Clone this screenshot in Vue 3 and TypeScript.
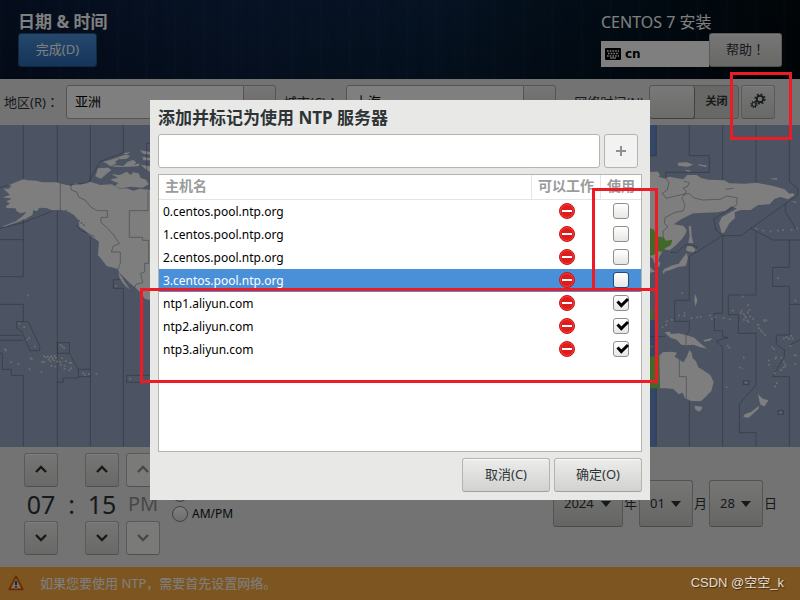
<script setup lang="ts">
import { ref } from 'vue'

interface NtpServer {
  host: string
  enabled: boolean
}

const servers = ref<NtpServer[]>([
  { host: '0.centos.pool.ntp.org', enabled: false },
  { host: '1.centos.pool.ntp.org', enabled: false },
  { host: '2.centos.pool.ntp.org', enabled: false },
  { host: '3.centos.pool.ntp.org', enabled: false },
  { host: 'ntp1.aliyun.com', enabled: true },
  { host: 'ntp2.aliyun.com', enabled: true },
  { host: 'ntp3.aliyun.com', enabled: true },
])
const selected = ref(3)
const newHost = ref('')
const region = ref('亚洲')
const city = ref('上海')
const hourFormat = ref('24')

function addServer(): void {
  const host = newHost.value.trim()
  if (host) {
    servers.value.push({ host, enabled: true })
    newHost.value = ''
  }
}

// Small islands in map units: [x, y]
const westIslands: number[][] = [
  [84, 527], [59, 611], [73, 622], [88, 654], [82, 660], [105, 680], [15, 688], [19, 692], [34, 727], [56, 733],
  [92, 715], [96, 719], [89, 748], [125, 757], [132, 709], [138, 712], [144, 710], [149, 714], [154, 709], [146, 720],
  [152, 724], [158, 717], [163, 722], [168, 714], [172, 725], [158, 712], [127, 726], [132, 726], [155, 738], [167, 740],
  [183, 735], [187, 715], [198, 724], [194, 738], [194, 747], [209, 729], [214, 729], [214, 745], [209, 751], [182, 726],
  [182, 675], [187, 680], [193, 684], [250, 760], [255, 765], [267, 762], [290, 763], [391, 777], [349, 498], [165, 708],
]
const eastIslands: number[][] = [
  [127, 520], [309, 530], [467, 542], [117, 587], [134, 580], [134, 588], [96, 600], [155, 595], [172, 593], [182, 591],
  [211, 587], [216, 597], [227, 591], [251, 595], [270, 599], [279, 572], [303, 579], [305, 573], [312, 583], [316, 590],
  [324, 578], [329, 571], [331, 590], [322, 602], [326, 606], [312, 600], [340, 597], [324, 556], [318, 593], [374, 600],
  [380, 602], [355, 615], [357, 625], [363, 632], [368, 638], [376, 645], [81, 604], [79, 616], [68, 622], [432, 656],
  [440, 652], [447, 657], [454, 648], [458, 656], [452, 678], [397, 683], [403, 688], [387, 722], [388, 735], [407, 716],
  [425, 714], [432, 726], [437, 734], [431, 743], [424, 751], [405, 760], [466, 733], [469, 707], [464, 706], [411, 790],
  [406, 800], [260, 802], [319, 788], [422, 878], [350, 327], [370, 332], [392, 335], [414, 332], [430, 331], [455, 330],
  [472, 326], [264, 678], [269, 684], [312, 713], [436, 740], [414, 475], [409, 712], [373, 604],
]
</script>

<template>
  <div class="screen">
    <header class="header">
      <div class="header-left">
        <h1 class="heading">日期 &amp; 时间</h1>
        <button type="button" class="done">完成(D)</button>
      </div>
      <div class="header-right">
        <div class="product">CENTOS 7 安装</div>
        <div class="header-tools">
          <button type="button" class="layout">
            <svg width="16" height="12" viewBox="0 0 16 12" aria-hidden="true">
              <rect width="16" height="12" rx="1" fill="#000" />
              <path d="M2 3H14M3 5.5H14M2 8H14" stroke="#fff" stroke-width="1.5" stroke-dasharray="1.6 1.1" />
              <path d="M5 10H11" stroke="#fff" stroke-width="1.2" />
            </svg>
            <span>cn</span>
          </button>
          <button type="button" class="btn help">帮助<span class="punct">！</span></button>
        </div>
      </div>
    </header>

    <div class="toolbar">
      <label for="region">地区(R)<span class="punct">：</span></label>
      <div class="combo">
        <input id="region" v-model="region" type="text" />
        <button type="button" aria-label="地区列表"></button>
      </div>
      <label for="city">城市(C)<span class="punct">：</span></label>
      <div class="combo">
        <input id="city" v-model="city" type="text" />
        <button type="button" aria-label="城市列表"></button>
      </div>
      <span id="net-label" class="net-label">网络时间(N)</span>
      <button type="button" class="switch" role="switch" aria-checked="false" aria-labelledby="net-label">
        <span class="knob"></span>
        <span class="state">关闭</span>
      </button>
      <div class="gear-wrap">
        <button type="button" class="btn square" aria-label="配置 NTP">
          <svg width="16" height="16" viewBox="0 0 16 16" fill="none" stroke="#2e3436" aria-hidden="true">
            <circle cx="10" cy="6" r="3.2" stroke-width="1.8" />
            <circle cx="10" cy="6" r="4.8" stroke-width="1.6" stroke-dasharray="1.9 1.87" />
            <circle cx="4" cy="11.5" r="2" stroke-width="1.2" />
            <circle cx="4" cy="11.5" r="3" stroke-width="1.2" stroke-dasharray="1.2 1.156" />
          </svg>
        </button>
        <div class="mark mark-gear"></div>
      </div>
    </div>

    <div class="map">
      <svg viewBox="0 0 2400 966" preserveAspectRatio="xMidYMid slice" aria-hidden="true">
        <rect width="2400" height="966" fill="#98a8c6" />
        <g transform="translate(0 -15)">
          <path class="land" d="M8 232L30 225 20 215 10 205 25 207 35 197 27 195 70 178 82 181 110 182 125 187 170 187 190 193 212 197 228 190 240 194 270 185 285 190 300 195 335 193 360 206 380 205 400 212 420 206 450 210V540L435 537 422 518 405 502 390 490 375 475 358 458 354 447 320 438 304 417 294 405 297 365 284 354 268 345 256 332 238 320 236 303 222 285 205 275 185 270 155 270 140 264 118 263 111 274 100 270 97 285 76 297 55 305 10 321 9 319 48 304 68 288 80 276 62 280 50 274 46 265 20 264 18 258 30 251 19 244 36 236Z" />
          <path class="land" d="M355 457L365 470 374 485 390 508 379 500 367 487 359 474ZM272 344L292 348 304 356 303 364 288 358 277 351Z" />
          <path class="land" d="M294 145L325 143 334 150 322 160 303 176 286 169ZM308 125L330 120 351 113 357 119 345 124 350 130 333 137 345 136 370 138 383 125 400 120 409 127 401 135 418 130 417 138 390 140 355 141 330 138 318 129ZM350 113L375 104 391 107 380 116 362 118ZM370 99L391 97 379 104ZM334 163L360 165 380 155 393 165 399 157 416 160 422 174 438 179 446 193 428 203 392 200 362 205 345 198 355 190 337 182 332 178 354 173ZM419 91L450 96V104L430 101ZM427 110L450 114V121L430 121ZM423 134L450 139V156L435 146Z" />
          <path class="sea-cut" d="M195 270L220 292 235 300 254 317M215 285L235 318" />
          <path class="zone" d="M70 15V178M172 15V187M271 15V185M370 15V98M70 297V470M0 359H70M0 470H70M0 553H70V605M50 605H85L120 680 118 692H90L65 634 50 625ZM0 646H64M0 661H70M7 700V748H34V766H70V980M0 700H7M172 273V787H190V774H235V748L208 700V668H172V700H208M235 748H271V770H235M271 348V748M271 770V980M172 787V980M370 505V980M340 479H362M340 479V505H370M380 766H450M380 766V787H450M0 203L25 196M0 325L70 308 155 274M210 195L265 188 300 125 370 98M228 316L245 332 285 350M440 155V70H450" />
          <path class="zone" d="M181 188V271M212 195L214 210 230 216 237 232 255 240 273 262 293 272H322V292H303V307L321 323 341 345 358 371 340 378 334 396H361V430L354 447M444 212V272H388V352H428V361H446V430H434V456L422 460 428 488 408 493 405 502" />
          <rect v-for="([x, y], i) in westIslands" :key="i" class="isle" :x="x - 3" :y="y - 3" width="5" height="5" />
        </g>
        <g transform="translate(1920 -15)">
          <path fill="#688ecc" d="M0 15H49V108H0ZM30 600H49V980H30Z" />
          <path class="land" d="M25 155L53 155 60 164 56 170 75 176 87 170 130 178 142 165 170 165 183 174 205 179 253 181 268 190 315 191 350 188 400 198 434 208 448 221 460 220 464 226 444 238 422 231 404 236 389 253 354 255 332 270 302 270 284 277 285 294 268 310 252 338 245 339 237 310 245 292 268 278 291 266 274 259 257 272 232 277 193 278 160 280 126 296 101 313 130 317 140 330 136 343 125 358 105 378 89 391 70 388 63 402 58 410 55 422 61 430 57 441 45 432 39 417 25 405Z" />
          <path class="land" d="M146 319H153L155 347 160 370 145 368 149 348ZM142 378L154 377 171 391 160 397 143 394 138 389ZM140 399L144 414 137 438 115 441 99 447 82 453 67 455 74 446 98 436 116 431 130 412ZM67 454L78 450 71 462Z" />
          <path fill="#82d254" d="M25 322L43 330 47 349 70 351 78 362 97 359 93 375 75 385 70 396 49 393 42 405 25 408ZM25 710L58 707V805H25ZM25 565L41 571 35 578 42 593 38 601 25 594ZM25 677L43 677 35 683H25Z" />
          <path class="land" d="M58 707L68 697 97 695 111 698 104 710 118 719 130 727 140 711 148 690 155 699 158 715 168 724 175 742 190 751 211 765 221 786 214 813 197 830 183 844 154 843 135 834 128 818 116 823 100 807 78 805 60 805Z" />
          <path class="land" d="M74 637L90 635 93 642 116 640 145 647 163 653 179 668 201 686 180 681 160 674 141 676 124 674 110 659 91 653ZM164 857L187 860 184 870 176 875 165 867ZM354 822L368 836 385 841 374 859 362 855 359 846ZM357 857L356 866 326 893 310 891 314 883 334 875ZM113 128L140 127 160 134 143 140 115 137ZM175 133L203 137 197 141 175 136ZM134 150L154 152 145 156ZM389 176L412 174 410 179ZM452 243L470 246 467 249ZM165 521L172 540 167 560 163 541ZM190 661L215 654 213 661 194 665ZM295 738L311 747 301 744ZM30 440L45 455 30 458Z" />
          <path class="zone" d="M49 15V108H30M148 15V107H208V157H77V173M248 15V180M348 15V188M448 15V185L473 205V225L333 325 398 360H480M436 250V275L470 330M248 347H303L333 325M290 255L221 297 228 330 248 347 148 410V541H104V604H148V632L138 647V675M248 347V580H223V632H248V650L263 653 248 657 230 664 248 682V980M348 335V525H265V584H295V640H348V795L298 852V938H348V980M448 360V442H398V499H448V553H480M448 553V645H409V673L433 690V710L398 770H448V980M448 675L480 660M148 843V980M49 805V980M30 650H75M90 397H110L139 373 171 380 163 399M310 782H328V794H310ZM414 871H430V883H414Z" />
          <path class="zone" d="M77 174L87 186 82 210 67 220 78 235 115 226 147 220 160 233 188 240 240 238 260 228 291 233 290 253M131 183L148 188 142 200 130 204 139 215 126 235 135 255 129 273 105 277 75 293 73 310 84 321 69 333 70 351M256 208L280 205M118 719V770H139V834" />
          <rect v-for="([x, y], i) in eastIslands" :key="i" class="isle" :x="x - 3" :y="y - 3" width="5" height="5" />
        </g>
      </svg>
    </div>

    <div class="bottom">
      <div class="time">
        <div class="spin">
          <button type="button" class="btn square" aria-label="小时加"><svg class="chev" viewBox="0 0 14 9"><path d="M2 7L7 2L12 7" /></svg></button>
          <output>07</output>
          <button type="button" class="btn square" aria-label="小时减"><svg class="chev" viewBox="0 0 14 9"><path d="M2 2L7 7L12 2" /></svg></button>
        </div>
        <span class="colon">:</span>
        <div class="spin">
          <button type="button" class="btn square" aria-label="分钟加"><svg class="chev" viewBox="0 0 14 9"><path d="M2 7L7 2L12 7" /></svg></button>
          <output>15</output>
          <button type="button" class="btn square" aria-label="分钟减"><svg class="chev" viewBox="0 0 14 9"><path d="M2 2L7 7L12 2" /></svg></button>
        </div>
        <div class="spin ampm">
          <button type="button" class="btn square" disabled aria-label="上午"><svg class="chev" viewBox="0 0 14 9"><path d="M2 7L7 2L12 7" /></svg></button>
          <output>PM</output>
          <button type="button" class="btn square" disabled aria-label="下午"><svg class="chev" viewBox="0 0 14 9"><path d="M2 2L7 7L12 2" /></svg></button>
        </div>
        <div class="formats">
          <label><input v-model="hourFormat" type="radio" name="format" value="24" />24 小时</label>
          <label><input v-model="hourFormat" type="radio" name="format" value="12" />AM/PM</label>
        </div>
      </div>
      <div class="date">
        <div class="pick year">
          <select id="year"><option>2024</option></select>
          <svg viewBox="0 0 10 6" aria-hidden="true"><path d="M0 0H10L5 6Z" /></svg>
        </div>
        <label for="year">年</label>
        <div class="pick">
          <select id="month"><option>01</option></select>
          <svg viewBox="0 0 10 6" aria-hidden="true"><path d="M0 0H10L5 6Z" /></svg>
        </div>
        <label for="month">月</label>
        <div class="pick">
          <select id="day"><option>28</option></select>
          <svg viewBox="0 0 10 6" aria-hidden="true"><path d="M0 0H10L5 6Z" /></svg>
        </div>
        <label for="day">日</label>
      </div>
    </div>

    <footer class="warning">
      <svg width="16" height="16" viewBox="0 0 16 16" aria-hidden="true">
        <path d="M8 1.2L15 14.5H1Z" fill="#f57900" stroke="#d0550c" stroke-width="1.6" stroke-linejoin="round" />
        <path d="M8 3.5L13 13.2H3Z" fill="#f2e0c4" />
        <path d="M8 6V10M8 11V12.6" stroke="#222" stroke-width="1.6" />
      </svg>
      <span>如果您要使用 NTP，需要首先设置网络。</span>
    </footer>

    <div class="scrim">
      <div class="dialog" role="dialog" aria-modal="true" aria-labelledby="dialog-title">
        <h2 id="dialog-title" class="dialog-title">添加并标记为使用 NTP 服务器</h2>
        <form class="add" @submit.prevent="addServer">
          <input v-model="newHost" type="text" aria-label="主机名" />
          <button type="submit" aria-label="添加">
            <svg width="12" height="12" viewBox="0 0 12 12"><path d="M6 1V11M1 6H11" stroke="#8d9091" stroke-width="2" /></svg>
          </button>
        </form>
        <div class="list">
          <table>
            <colgroup>
              <col />
              <col class="col-work" />
              <col class="col-use" />
            </colgroup>
            <thead>
              <tr>
                <th class="host-head">主机名</th>
                <th>可以工作</th>
                <th>使用</th>
              </tr>
            </thead>
            <tbody>
              <tr v-for="(s, i) in servers" :key="s.host" :class="{ selected: i === selected }" @click="selected = i">
                <td class="host">{{ s.host }}</td>
                <td class="icon-cell">
                  <svg width="16" height="16" viewBox="0 0 16 16" role="img" aria-label="不可用">
                    <circle cx="8" cy="8" r="7.5" fill="#e01b1b" stroke="#cc1414" />
                    <circle cx="8" cy="8" r="6.5" fill="none" stroke="#ee4a4a" stroke-width="0.8" />
                    <rect x="3" y="7" width="10" height="2" fill="#fff" />
                  </svg>
                </td>
                <td class="icon-cell">
                  <span class="check">
                    <input v-model="s.enabled" type="checkbox" :aria-label="s.host" />
                    <svg v-if="s.enabled" viewBox="0 0 16 16" aria-hidden="true">
                      <path d="M4.5 6.5L8.3 10.5L15 4" fill="none" stroke="#000" stroke-width="3" />
                    </svg>
                  </span>
                </td>
              </tr>
            </tbody>
          </table>
        </div>
        <div class="actions">
          <button type="button" class="btn">取消(C)</button>
          <button type="button" class="btn">确定(O)</button>
        </div>
        <div class="mark mark-use"></div>
        <div class="mark mark-servers"></div>
      </div>
    </div>
    <div class="watermark">CSDN @空空_k</div>
  </div>
</template>

<style>
body {
  margin: 0;
}
</style>

<style scoped>
* {
  box-sizing: border-box;
}
.screen {
  position: relative;
  display: flex;
  flex-direction: column;
  min-height: 100vh;
  overflow: hidden;
  background: #e7e7e6;
  color: #2e3436;
  font-family: "Noto Sans", "Noto Sans CJK SC", sans-serif;
  font-size: 13px;
  line-height: 20px;
}
button,
input,
select {
  margin: 0;
  padding: 0;
  font: inherit;
  color: inherit;
}
.btn {
  height: 34px;
  padding-bottom: 2px;
  border: 1px solid #b4b4b0;
  border-bottom-color: #a0a09c;
  border-radius: 3px;
  background: linear-gradient(#ececeb, #d2d2d0);
  box-shadow: inset 0 1px #fafafa;
}
.square {
  display: flex;
  align-items: center;
  justify-content: center;
  width: 34px;
}
.punct {
  font-family: "Noto Sans CJK TC", sans-serif;
  line-height: 1;
}
.header {
  display: flex;
  justify-content: space-between;
  height: 79px;
  padding: 12px 18px;
  color: #fff;
  background:
    repeating-linear-gradient(90deg, rgba(80, 130, 190, 0.03) 0 3px, transparent 3px 11px, rgba(0, 0, 0, 0.05) 11px 17px, transparent 17px 29px),
    linear-gradient(rgba(0, 0, 0, 0), rgba(0, 0, 0, 0.2)),
    linear-gradient(90deg, #0a1a38, #0e264c 30%, #0c2646 55%, #04182a 75%, #020a10);
}
.heading {
  margin: 0 0 1px;
  font-size: 17px;
  line-height: 20px;
}
.done {
  width: 79px;
  height: 34px;
  padding-bottom: 2px;
  border: 1px solid #1c5288;
  border-radius: 3px;
  background: linear-gradient(#4a90d9, #2a6ab2);
}
.header-right {
  width: 181px;
}
.product {
  margin-bottom: 1px;
  font-size: 16px;
  line-height: 20px;
}
.header-tools {
  display: flex;
  align-items: flex-end;
}
.layout {
  display: flex;
  flex: 1;
  align-items: center;
  gap: 4px;
  height: 26px;
  padding-left: 4px;
  border: 0;
  background: #fff;
  color: #000;
  font-family: "DejaVu Sans", sans-serif;
  font-size: 12px;
  font-weight: bold;
}
.help {
  width: 73px;
  color: #2e3436;
}
.toolbar {
  display: flex;
  align-items: center;
  height: 46px;
  padding: 0 25px 0 4px;
}
.toolbar label {
  width: 62px;
  white-space: nowrap;
}
.combo {
  display: flex;
  flex: 0 1 210px;
  min-width: 0;
  height: 34px;
  margin-right: 8px;
}
.combo input {
  flex: 1;
  min-width: 0;
  padding: 0 0 2px 8px;
  border: 1px solid #a8a8a4;
  border-radius: 3px 0 0 3px;
  background: #fff;
  color: #000;
}
.combo button {
  width: 32px;
  border: 1px solid #a8a8a4;
  border-left: 0;
  border-radius: 0 3px 3px 0;
  background: linear-gradient(#ececeb, #d2d2d0);
}
.net-label {
  margin-left: auto;
  margin-right: 5px;
  white-space: nowrap;
}
.switch {
  display: flex;
  width: 90px;
  height: 34px;
  margin-right: 2px;
  border: 1px solid #a8a8a4;
  border-radius: 3px;
  background: #d0d0cd;
}
.knob {
  width: 45px;
  height: 33px;
  border-right: 1px solid #80807c;
  border-bottom: 1px solid #80807c;
  border-radius: 3px;
  background: linear-gradient(#f2f2f1, #d8d8d6);
}
.state {
  flex: 1;
  font-size: 11px;
  font-weight: bold;
  line-height: 30px;
}
.gear-wrap {
  position: relative;
}
.mark {
  position: absolute;
  z-index: 5;
  border: 3px solid #ed1c24;
  pointer-events: none;
}
.mark-gear {
  top: -13px;
  left: -11px;
  width: 62px;
  height: 68px;
}
.map {
  position: relative;
  flex: 1;
  min-height: 322px;
}
.map svg {
  position: absolute;
  inset: 0;
  width: 100%;
  height: 100%;
}
.land {
  fill: #fcfcfc;
}
.isle {
  fill: #e0e0d8;
}
.sea-cut {
  fill: none;
  stroke: #98a8c6;
  stroke-width: 4;
  stroke-dasharray: 6 4;
}
.zone {
  fill: none;
  stroke: #3c4858;
  stroke-opacity: 0.38;
  stroke-width: 3;
}
.bottom {
  display: flex;
  justify-content: space-between;
  height: 120px;
  padding: 6px 24px 0;
}
.time {
  display: flex;
  align-items: flex-start;
}
.spin {
  display: flex;
  flex-direction: column;
  align-items: center;
  width: 34px;
}
.spin output {
  font-size: 25px;
  line-height: 34px;
}
.colon {
  width: 27px;
  font-size: 25px;
  line-height: 34px;
  text-align: center;
  align-self: flex-start;
  margin-top: 34px;
}
.ampm {
  margin-left: 7px;
}
.ampm output {
  font-size: 20px;
  color: #8d9091;
}
.ampm .btn {
  background: #f4f4f3;
}
.chev {
  width: 14px;
  height: 9px;
  fill: none;
  stroke: #2e3436;
  stroke-width: 2.4;
}
.ampm .chev {
  stroke: #8d9091;
}
.formats {
  display: flex;
  flex-direction: column;
  margin: 31px 0 0 12px;
  font-size: 12px;
  color: #111;
}
.formats label {
  display: flex;
  align-items: center;
  gap: 4px;
  height: 20px;
}
.formats input {
  appearance: none;
  width: 16px;
  height: 16px;
  border: 1px solid #80807c;
  border-radius: 50%;
  background: linear-gradient(#fff, #dcdcda);
}
.date {
  display: flex;
  align-items: center;
  height: 47px;
  margin-top: 27px;
}
.date label {
  width: 16px;
  padding-left: 1px;
  padding-bottom: 2px;
  white-space: nowrap;
}
.date label:last-child {
  width: 13px;
}
.pick {
  position: relative;
  width: 54px;
  height: 47px;
}
.year {
  width: 70px;
}
.pick select {
  appearance: none;
  width: 100%;
  height: 100%;
  padding: 0 0 2px 10px;
  border: 1px solid #a8a8a4;
  border-bottom-color: #94948f;
  border-radius: 3px;
  background: linear-gradient(#ececeb, #cbcbc8);
}
.pick svg {
  position: absolute;
  top: 21px;
  right: 12px;
  width: 10px;
  height: 6px;
  fill: #2e3436;
  pointer-events: none;
}
.warning {
  display: flex;
  align-items: center;
  gap: 16px;
  height: 33px;
  padding: 0 8px 2px;
  background: #fbab41;
  color: #fff;
}
.scrim {
  position: absolute;
  inset: 0;
  z-index: 2;
  display: flex;
  align-items: center;
  justify-content: center;
  background: rgba(0, 0, 0, 0.5);
}
.dialog {
  position: relative;
  display: flex;
  flex-direction: column;
  gap: 6px;
  width: 500px;
  padding: 8px;
  background: #e8e8e6;
}
.dialog-title {
  margin: 0;
  font-size: 17px;
  line-height: 20px;
}
.add {
  display: flex;
  gap: 4px;
  height: 34px;
  padding-right: 4px;
}
.add input {
  flex: 1;
  padding: 0 8px;
  border: 1px solid #b4b4b0;
  border-radius: 3px;
  background: #fff;
}
.add button {
  display: flex;
  align-items: center;
  justify-content: center;
  width: 34px;
  border: 1px solid #b4b4b0;
  border-radius: 3px;
  background: #f2f2f2;
}
.list {
  min-height: 278px;
  border: 1px solid #b4b4b0;
  background: #fff;
}
table {
  width: 100%;
  table-layout: fixed;
  border-collapse: separate;
  border-spacing: 0;
}
.col-work {
  width: 69px;
}
.col-use {
  width: 40px;
}
th {
  height: 25px;
  padding: 0 0 2px;
  border-right: 1px solid #e4e4e2;
  border-bottom: 1px solid #e4e4e2;
  color: #999b9c;
  font-size: 14px;
  line-height: 20px;
  white-space: nowrap;
}
th:last-child {
  border-right: 0;
}
.host-head {
  padding-left: 6px;
  text-align: left;
}
td {
  height: 23px;
  padding: 0;
}
.host {
  padding-left: 4px;
  color: #000;
  font-size: 12px;
  line-height: 20px;
}
.selected td {
  background: #4a90d9;
  color: #fff;
}
.icon-cell {
  padding-bottom: 1px;
  text-align: center;
  line-height: 0;
}
.check {
  position: relative;
  display: inline-block;
  width: 16px;
  height: 16px;
}
.check input {
  appearance: none;
  width: 16px;
  height: 16px;
  border: 1px solid #8e8e8a;
  border-radius: 3px;
  background: linear-gradient(#fff, #e6e6e4);
}
.selected .check input {
  border-color: #1c4a7c;
}
.check svg {
  position: absolute;
  inset: 0;
  pointer-events: none;
}
.actions {
  display: flex;
  justify-content: flex-end;
  gap: 4px;
}
.actions .btn {
  width: 88px;
}
.mark-use {
  top: 88px;
  left: 442px;
  width: 66px;
  height: 103px;
}
.mark-servers {
  top: 188px;
  left: -10px;
  width: 518px;
  height: 95px;
}
.watermark {
  position: absolute;
  right: 16px;
  bottom: 7px;
  z-index: 6;
  color: #e2dcd3;
  font-family: "Liberation Sans", "Noto Sans CJK SC", sans-serif;
  font-size: 13px;
  text-shadow: 1px 1px 1px rgba(0, 0, 0, 0.5);
}
</style>
